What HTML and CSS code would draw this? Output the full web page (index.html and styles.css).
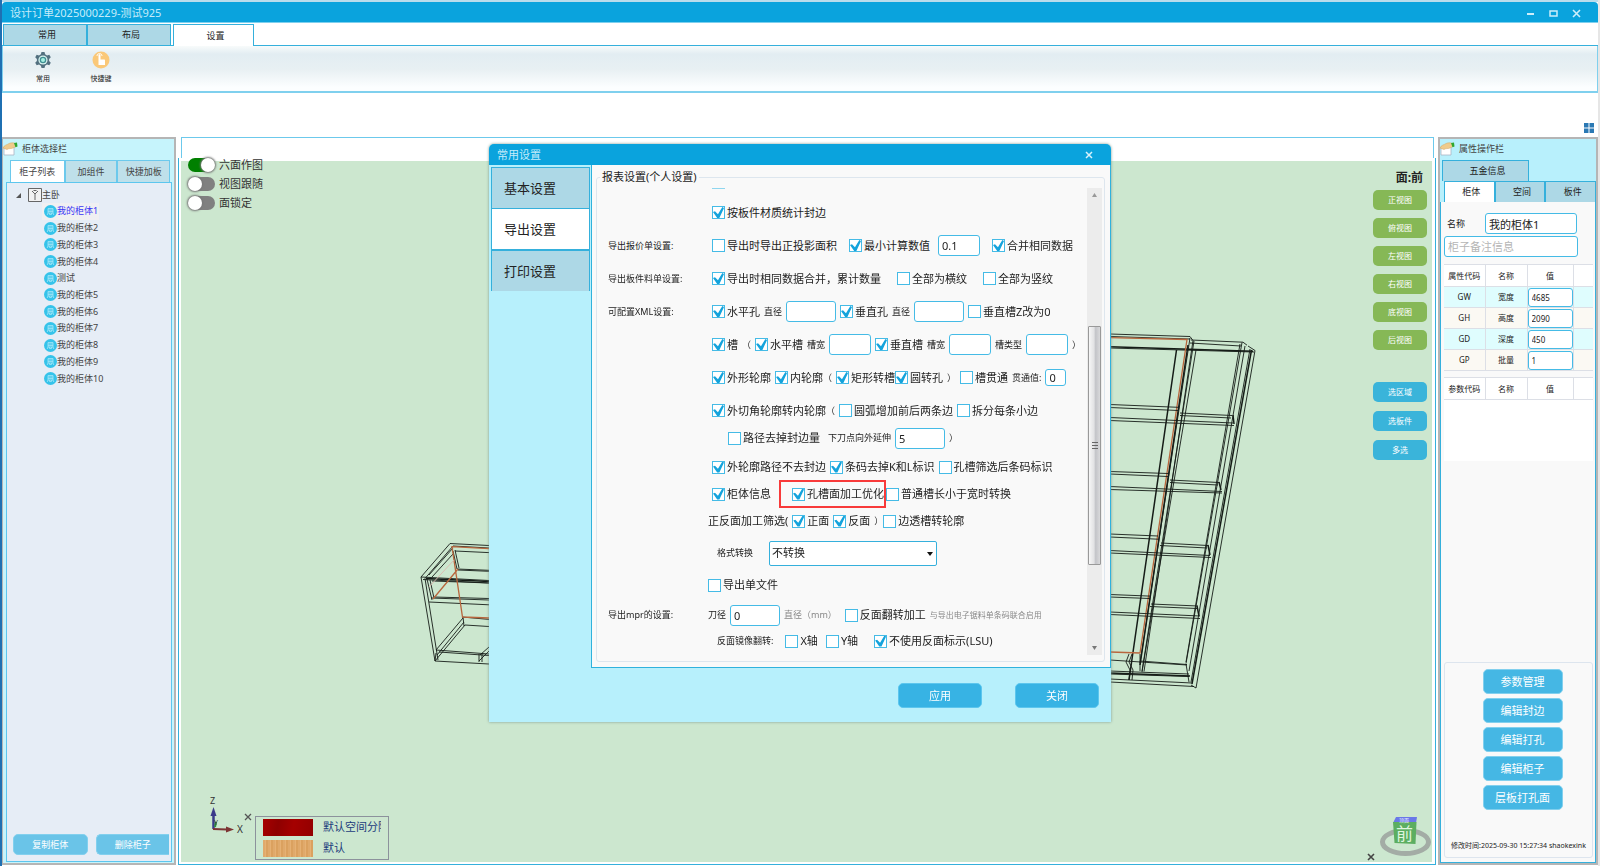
FILE: index.html
```html
<!DOCTYPE html>
<html lang="zh-CN">
<head>
<meta charset="utf-8">
<title>设计订单2025000229-测试925</title>
<link rel="stylesheet" href="styles.css">
</head>
<body>
<svg class="defs" width="0" height="0" aria-hidden="true">
  <defs>
    <symbol id="i-cabinet" viewBox="0 0 13 13">
      <circle cx="6.500" cy="6.500" r="6.500" fill="#35c3ea"/>
      <path d="M4 3.500h5v4.500H4zM4 5h5M4 6.500h5M4 8l-.8 2M9 8l.8 2M5.500 8v1.500h2V8" fill="none" stroke="#a5e6f8" stroke-width=".8"/>
    </symbol>
    <symbol id="i-hand" viewBox="0 0 15 14">
      <path d="M1 5h10v8H1z" fill="#fff" stroke="#a9b4c4" stroke-width=".8"/>
      <path d="M0 6c1-3 4-3 6-4.500C8 .5 11 .6 12 1.500l1 3-3 1.500c-2 1-4 0-6 1.500z" fill="#efcb8c" stroke="#d3a662" stroke-width=".5"/>
      <path d="M11 1l3-.5.5 4-2 .7z" fill="#2fa82f"/>
    </symbol>
  </defs>
</svg>

<div class="window">
  <header class="titlebar">
    <span>设计订单2025000229-测试925</span>
    <div class="winbtns">
      <button aria-label="最小化"><svg width="9" height="9"><path d="M1 5h7" stroke="#cdeefa" stroke-width="2"/></svg></button>
      <button aria-label="最大化"><svg width="9" height="9"><path d="M1 2h7v5H1z" fill="none" stroke="#cdeefa" stroke-width="1.500"/></svg></button>
      <button aria-label="关闭"><svg width="9" height="9"><path d="M1 1l7 7M8 1l-7 7" stroke="#cdeefa" stroke-width="1.600"/></svg></button>
    </div>
  </header>

  <nav class="tabs">
    <button class="tab">常用</button><button class="tab">布局</button><button class="tab tab-on">设置</button>
  </nav>
  <div class="ribbon">
    <button class="tool">
      <svg width="16" height="18" viewBox="0 0 16 18"><path d="M6.500 1h3l.6 2.300 1.900 1.100 2.300-.7 1.500 2.600L14.100 8v2l1.700 1.700-1.500 2.600-2.300-.7-1.900 1.100-.6 2.300h-3l-.6-2.300L4 13.600l-2.300.7-1.500-2.600L1.900 10V8L.2 6.300l1.500-2.600 2.300.7 1.900-1.100z" fill="#52707f"/><circle cx="8" cy="9" r="4.600" fill="#d9f3f0"/><circle cx="8" cy="9" r="3.300" fill="#3f8f93"/><circle cx="8" cy="9" r="2" fill="#a6f0e2"/></svg>
      <span>常用</span>
    </button>
    <button class="tool">
      <svg width="18" height="18" viewBox="0 0 18 18"><circle cx="9" cy="9" r="8.500" fill="#fac878"/><path d="M6.500 4c0-1 2-1 2 0v4.500h3.500c.8 0 1 .5 1 1V14H6.500z" fill="#fff"/><path d="M5 5c0-3.300 5-3.300 5 0" fill="none" stroke="#fff" stroke-width=".9"/></svg>
      <span>快捷键</span>
    </button>
  </div>
  <div class="spacer">
    <svg width="10" height="10"><path d="M0 0h4.500v4.500H0zM5.500 0H10v4.500H5.500zM0 5.500h4.500V10H0zM5.500 5.500H10V10H5.500z" fill="#2b79b4"/></svg>
  </div>

  <div class="work">
    <aside class="side left">
      <h2 class="side-title"><svg width="15" height="14"><use href="#i-hand"/></svg>柜体选择栏</h2>
      <div class="ltabs"><button class="ltab ltab-on">柜子列表</button><button class="ltab">加组件</button><button class="ltab">快捷加板</button></div>
      <div class="treebox">
        <div class="root">
          <svg width="5" height="5"><path d="M5 0v5H0z" fill="#555"/></svg>
          <svg width="14" height="14"><path d="M.5.5h13v13H.5z" fill="#f2f2f2" stroke="#666"/><path d="M7 12V5M4 3l3 3 3-3M5.500 2.500h3" fill="none" stroke="#666"/></svg>
          <span>主卧</span>
        </div>
        <ul class="tree">
          <li class="sel"><svg width="13" height="13"><use href="#i-cabinet"/></svg>我的柜体1</li>
          <li><svg width="13" height="13"><use href="#i-cabinet"/></svg>我的柜体2</li>
          <li><svg width="13" height="13"><use href="#i-cabinet"/></svg>我的柜体3</li>
          <li><svg width="13" height="13"><use href="#i-cabinet"/></svg>我的柜体4</li>
          <li><svg width="13" height="13"><use href="#i-cabinet"/></svg>测试</li>
          <li><svg width="13" height="13"><use href="#i-cabinet"/></svg>我的柜体5</li>
          <li><svg width="13" height="13"><use href="#i-cabinet"/></svg>我的柜体6</li>
          <li><svg width="13" height="13"><use href="#i-cabinet"/></svg>我的柜体7</li>
          <li><svg width="13" height="13"><use href="#i-cabinet"/></svg>我的柜体8</li>
          <li><svg width="13" height="13"><use href="#i-cabinet"/></svg>我的柜体9</li>
          <li><svg width="13" height="13"><use href="#i-cabinet"/></svg>我的柜体10</li>
        </ul>
        <div class="lbtns"><button class="btn pale">复制柜体</button><button class="btn pale cut">删除柜子</button></div>
      </div>
    </aside>

    <main class="center">
      <div class="strip"></div>
      <div class="frame">
        <div class="view">
          <svg class="wire" width="1252" height="700" viewBox="181 161 1252 700" fill="none" stroke="#151c17" stroke-width=".9">
            <g transform="translate(-1 0)">
              <path d="M490 545.500L451 543.500 422 577 436 661 490 664M490 548L454 546 426 578.500 439 660M422 577l68 3.500M424 579.500l66 3.500M433 581l57 2M430 602l60 2.800M432 598l58 2M435 597l55 1.500M428 579l5 21M431 580l4 18M456 551l34 1.600M454 551l4 18 32 1.300M456 550l4 18M459 570l31 1.300M436 661l30-36 24 1.500M437 650l27-32M438 655l27-33M437 650l53 4M440 652l50 3.500M464 617l1 9M463 617l27 2.400M480 661l10-10M481 655l9-8M480 654v8M483 653v9M430 575l24-27M433 577l21-23M437 653l-1 8"/>
              <path d="M490 581.500l-63-3" stroke-width="1.500"/>
              <path d="M490 548.700l-37-2L463.500 617l26.500 1M434 599l25-30" stroke="#b8663d" stroke-width="1.300"/>
              <path d="M430 587l25-27" stroke="#dcb9b0"/>
            </g>
            <g>
              <path d="M1110 334l80 2.500 3 4-49 331M1110 336.500l80 2.500M1191 340l52 2.200 4 3M1190 343l51 3M1190 338l-50 325M1194 341l-52 330M1196 350l-54 322M1242 342.500l-56 321M1240 344l-54 318M1245 346l-56 325M1248 346l7 4.500L1196 688l-5-3M1250 349l-59 333M1110 348l144 4"/>
              <path d="M1110 346.700l143 4.500M1176.500 350L1129 680M1251.500 350L1192 684M1188 345l-48 320" stroke-width="1.500"/>
              <path d="M1110 337.700l77 1.800L1140 653l-30-1" stroke="#b8663d" stroke-width="1.300"/>
              <path d="M1110 404.500l68 2.800M1110 407.500l68 3M1110 417.500l123 5.500M1110 420.500l124 5M1180 413l52 2.500M1180 415.500l51 2.500M1110 471.500l58 2M1110 474l58 2.500M1110 486.500l112 5M1110 489.500l112 3.500M1170 480l49 2.500M1170 482.500l48 2.500M1110 534l48 2M1110 537l48 2.200M1110 550.500l100 5M1110 553l101 4.500M1161 543l47 2.500M1160 545.500l47 2.500M1110 594.500l40 1.600M1110 597l40 1.500M1110 612l90 4M1110 614.500l90 4M1151 604l47 2M1150 606.500l47 2M1110 660l77 5M1110 671l79 3M1110 674l79 2.500M1110 679l82 4M1110 682l84 4.500M1140 661l47 3.500M1129 654l-3 8 4 8-1 10M1132 654l-3 8 4 8-1 10M1140 654v17M1186 664l3 18"/>
              <path d="M1110 673l80 3M1233 415l1 9M1219 482l2 8M1208 545l2 10M1197 606l2 10" stroke-width="1.500"/>
            </g>
          </svg>

          <div class="toggles">
            <label><input type="checkbox" class="switch" checked>六面作图</label>
            <label><input type="checkbox" class="switch">视图跟随</label>
            <label><input type="checkbox" class="switch">面锁定</label>
          </div>

          <div class="views">
            <b>面:前</b>
            <button class="vbtn">正视图</button><button class="vbtn">俯视图</button><button class="vbtn">左视图</button><button class="vbtn">右视图</button><button class="vbtn">底视图</button><button class="vbtn">后视图</button>
            <button class="vbtn blue first">选区域</button><button class="vbtn blue">选板件</button><button class="vbtn blue">多选</button>
          </div>

          <div class="gizmo">
            <svg width="48" height="44" viewBox="205 796 48 44">
              <path d="M213.500 829v-15" stroke="#3a3a8a" stroke-width="2.500"/><path d="M210.500 816l3-9 3 9z" fill="#3a3a8a"/>
              <path d="M213 829l14 .5" stroke="#7d3434" stroke-width="2"/><path d="M226 826.500l8 3-8 3z" fill="#7d3434"/>
              <path d="M215 827l1-5" stroke="#2f8f3a" stroke-width="2"/>
              <text x="210" y="804" font-size="9">Z</text><text x="214" y="825" font-size="7">Y</text><text x="237" y="833" font-size="10">X</text>
              <path d="M245 814l6 6M251 814l-6 6" stroke="#555" stroke-width="1.300"/>
            </svg>
            <dl class="legend">
              <dt class="red"></dt><dd>默认空间分隔</dd>
              <dt class="wood"></dt><dd>默认</dd>
            </dl>
          </div>

          <svg class="cube" width="64" height="44" viewBox="1366 814 64 44">
            <ellipse cx="1405.500" cy="841" rx="23" ry="11.500" fill="none" stroke="#a3aca5" stroke-width="5"/>
            <path d="M1396 816h21l-1 6h-23z" fill="#6a78e8"/><path d="M1393 821h23.500l-1 22-21-1z" fill="#5cae61"/>
            <text x="1399" y="821" font-size="5" fill="#e6e9ff">顶面</text>
            <text x="1396" y="839" font-size="17" fill="#dff5df">前</text>
            <path d="M1368 853l6 6M1374 853l-6 6" stroke="#444" stroke-width="1.600"/>
          </svg>
        </div>
      </div>
    </main>

    <aside class="side right">
      <h2 class="side-title"><svg width="15" height="14"><use href="#i-hand"/></svg>属性操作栏</h2>
      <button class="rtab wide">五金信息</button>
      <div class="rtabs"><button class="rtab rtab-on">柜体</button><button class="rtab">空间</button><button class="rtab">板件</button></div>
      <div class="props">
        <div class="name"><label for="nm">名称</label><input id="nm" class="field" value="我的柜体1"></div>
        <input class="field remark" placeholder="柜子备注信息" aria-label="柜子备注信息">
        <table>
          <thead><tr><th class="c1">属性代码</th><th class="c2">名称</th><th class="c3">值</th><th></th></tr></thead>
          <tbody>
            <tr><td>GW</td><td>宽度</td><td class="v"><input class="field" aria-label="宽度" value="4685"></td><td></td></tr>
            <tr><td>GH</td><td>高度</td><td class="v"><input class="field" aria-label="高度" value="2090"></td><td></td></tr>
            <tr><td>GD</td><td>深度</td><td class="v"><input class="field" aria-label="深度" value="450"></td><td></td></tr>
            <tr><td>GP</td><td>批量</td><td class="v"><input class="field" aria-label="批量" value="1"></td><td></td></tr>
          </tbody>
        </table>
        <div class="params">
          <table><thead><tr><th class="c1">参数代码</th><th class="c2">名称</th><th class="c3">值</th><th></th></tr></thead></table>
        </div>
        <div class="actions">
          <button class="btn">参数管理</button><button class="btn">编辑封边</button><button class="btn">编辑打孔</button><button class="btn">编辑柜子</button><button class="btn">层板打孔面</button>
          <p>修改时间:2025-09-30 15:27:34 shaokexink</p>
        </div>
      </div>
    </aside>
  </div>
</div>

<div class="overlay">
  <section class="dialog" role="dialog" aria-label="常用设置">
    <header class="dlg-title"><span>常用设置</span><button aria-label="关闭"><svg width="8" height="8"><path d="M1 1l6 6M7 1L1 7" stroke="#d8f2fb" stroke-width="1.500"/></svg></button></header>
    <div class="dlg-body">
      <nav class="dtabs"><button class="dtab">基本设置</button><button class="dtab dtab-on">导出设置</button><button class="dtab">打印设置</button></nav>
      <div class="panel">
        <fieldset class="group">
          <legend>报表设置(个人设置)</legend>
          <div class="scroll">
            <div class="rows">
              <div class="clipped"></div>
              <div class="row"><span class="cap"></span><label class="ck"><input type="checkbox" checked>按板件材质统计封边</label></div>
              <div class="row"><span class="cap">导出报价单设置:</span><label class="ck"><input type="checkbox">导出时导出正投影面积</label><label class="ck m8"><input type="checkbox" checked>最小计算数值</label><input class="field w42 m4" aria-label="最小计算数值" value="0.1"><label class="ck m8"><input type="checkbox" checked>合并相同数据</label></div>
              <div class="row"><span class="cap">导出板件料单设置:</span><label class="ck"><input type="checkbox" checked>导出时相同数据合并，累计数量</label><label class="ck m12"><input type="checkbox">全部为横纹</label><label class="ck m12"><input type="checkbox">全部为竖纹</label></div>
              <div class="row"><span class="cap">可配置XML设置:</span><label class="ck"><input type="checkbox" checked>水平孔</label><label class="sm" for="d1">直径</label><input class="field w50" id="d1"><label class="ck"><input type="checkbox" checked>垂直孔</label><label class="sm" for="d2">直径</label><input class="field w50" id="d2"><label class="ck"><input type="checkbox">垂直槽Z改为0</label></div>
              <div class="row"><span class="cap"></span><label class="ck"><input type="checkbox" checked>槽</label><span class="sm">（</span><label class="ck"><input type="checkbox" checked>水平槽</label><label class="sm" for="s1">槽宽</label><input class="field w42" id="s1"><label class="ck"><input type="checkbox" checked>垂直槽</label><label class="sm" for="s2">槽宽</label><input class="field w42" id="s2"><label class="sm" for="s3">槽类型</label><input class="field w42" id="s3"><span class="sm">）</span></div>
              <div class="row"><span class="cap"></span><label class="ck"><input type="checkbox" checked>外形轮廓</label><label class="ck"><input type="checkbox" checked>内轮廓</label><span class="sm near">（</span><label class="ck"><input type="checkbox" checked>矩形转槽</label><label class="ck near"><input type="checkbox" checked>圆转孔</label><span class="sm">）</span><label class="ck"><input type="checkbox">槽贯通</label><label class="sm" for="t1">贯通值:</label><input class="field short" id="t1" value="0"></div>
              <div class="row"><span class="cap"></span><label class="ck"><input type="checkbox" checked>外切角轮廓转内轮廓</label><span class="sm near">（</span><label class="ck"><input type="checkbox">圆弧增加前后两条边</label><label class="ck"><input type="checkbox">拆分每条小边</label></div>
              <div class="row h22"><span class="cap in"></span><label class="ck"><input type="checkbox">路径去掉封边量</label><label class="sm m4" for="k1">下刀点向外延伸</label><input class="field w50" id="k1" value="5"><span class="sm">）</span></div>
              <div class="row h36"><span class="cap"></span><label class="ck"><input type="checkbox" checked>外轮廓路径不去封边</label><label class="ck"><input type="checkbox" checked>条码去掉K和L标识</label><label class="ck"><input type="checkbox">孔槽筛选后条码标识</label></div>
              <div class="row h18"><span class="cap"></span><label class="ck"><input type="checkbox" checked>柜体信息</label><label class="ck mark m4"><input type="checkbox" checked>孔槽面加工优化</label><label class="ck near"><input type="checkbox">普通槽长小于宽时转换</label></div>
              <div class="row h36"><span class="cap out"></span><span>正反面加工筛选(</span><label class="ck"><input type="checkbox" checked>正面</label><label class="ck"><input type="checkbox" checked>反面</label><span class="sm">）</span><label class="ck near"><input type="checkbox">边透槽转轮廓</label></div>
              <div class="row h28"><span class="cap mid"></span><label class="sm" for="fmt">格式转换</label><span class="combo m12"><select id="fmt"><option>不转换</option></select><svg width="6" height="4"><path d="M0 0h6L3 4z" fill="#111"/></svg></span></div>
              <div class="row h36"><span class="cap out"></span><label class="ck"><input type="checkbox">导出单文件</label></div>
              <div class="row h24"><span class="cap out">导出mpr的设置:</span><label class="sm" for="r1">刀径</label><input class="field w50" id="r1" value="0"><span class="sm gray">直径（mm）</span><label class="ck m4"><input type="checkbox">反面翻转加工</label><span class="xs gray">与导出电子锯料单条码联合启用</span></div>
              <div class="row h28"><span class="cap mid"></span><span class="sm">反面镜像翻转:</span><label class="ck m8"><input type="checkbox">X轴</label><label class="ck m4"><input type="checkbox">Y轴</label><label class="ck m12"><input type="checkbox" checked>不使用反面标示(LSU)</label></div>
            </div>
            <div class="bar">
              <svg width="5" height="4"><path d="M0 4h5L2.500 0z" fill="#999"/></svg>
              <div class="track"><div class="thumb"><i></i><i></i><i></i></div></div>
              <svg width="5" height="4"><path d="M0 0h5L2.500 4z" fill="#777"/></svg>
            </div>
          </div>
        </fieldset>
      </div>
    </div>
    <footer class="dlg-foot"><button class="btn deep">应用</button><button class="btn deep">关闭</button></footer>
  </section>
</div>
</body>
</html>
```
FILE: styles.css
```css
* { box-sizing: border-box; }
body {
  margin: 0;
  height: 100vh;
  overflow: hidden;
  background: linear-gradient(90deg, #1f70b2 2px, #e6e6e6 2px);
  font: 11px/16px "Noto Sans", "Noto Sans CJK SC", sans-serif;
  color: #222;
  white-space: nowrap;
}
button, input, select { font: inherit; color: inherit; margin: 0; padding: 0; }
button { border: 0; background: none; }
h2, ul, dl, dd, p { margin: 0; padding: 0; }
.defs { position: absolute; }

.window {
  height: 100%;
  display: flex;
  flex-direction: column;
  margin: 0 2px;
  border-top: 2px solid #b9dcec;
  background: #fff;
}
.titlebar {
  height: 21px;
  flex: none;
  display: flex;
  justify-content: space-between;
  align-items: center;
  padding: 2px 17px 0 8px;
  border-bottom: 1px solid #7fd0ee;
  border-radius: 4px 4px 0 0;
  background: #0aa3dd;
  color: #c5ecfa;
}
.winbtns { display: flex; gap: 14px; }
.winbtns button { display: flex; width: 9px; height: 9px; }

.tabs {
  height: 22px;
  margin-top: 1px;
  flex: none;
  display: flex;
  padding-left: 1px;
  border-bottom: 1px solid #35b0dc;
}
.tab { width: 84px; padding-left: 4px; border: 1px solid #35b0dc; border-bottom: 0; background: #add8e6; font-size: 9px; }
.tab-on { width: 81px; height: 22px; margin-left: 2px; background: #fff; }
.ribbon {
  height: 47px;
  flex: none;
  display: flex;
  gap: 36px;
  padding: 5px 29px 0;
  border: solid #7fd0ee;
  border-width: 0 1px 2px;
  background: linear-gradient(#f8fbfb, #e2edf2 18%, #e8f0f3 52%, #fcfeff 92%);
}
.tool { display: flex; flex-direction: column; align-items: center; justify-content: flex-start; gap: 2px; width: 22px; font-size: 7px; }
.spacer { height: 44px; flex: none; display: flex; justify-content: flex-end; align-items: flex-end; padding: 0 4px 4px 0; }

.work { flex: 1; min-height: 0; display: flex; gap: 2px; }
.side { display: flex; flex-direction: column; border: 2px solid #b5b5b5; border-left-width: 1px; margin-bottom: 1px; }
.side-title { display: flex; align-items: center; gap: 4px; height: 20px; padding-bottom: 2px; flex: none; font-size: 9px; font-weight: 400; color: #444; }
.left { width: 174px; padding: 0 2px 1px 3px; background: #c6f4fc; }
.left .side-title { height: 21px; margin-left: -3px; }
.ltabs { display: flex; padding: 0 2px 0 4px; height: 22px; flex: none; }
.ltab { flex: 50; border: 1px solid #6cc9ec; border-bottom: 0; background: #bfe0ea; font-size: 9px; color: #444; }
.ltab-on { flex: 52; background: #fff; }
.treebox { flex: 1; display: flex; flex-direction: column; border: 1px solid #5cc6ee; background: #e6edf6; font-size: 9px; color: #444; }
.root { display: flex; align-items: center; padding: 4px 0 0 9px; }
.root svg + svg { margin-left: 7px; }
.tree { display: grid; grid-auto-rows: 1fr; height: 184px; margin-left: 35px; justify-items: start; list-style: none; }
.tree li { display: flex; align-items: center; padding: 0 1px 0 2px; }
.tree .sel { background: #f0f0f2; color: #3a34f5; }
.lbtns { display: flex; gap: 8px; margin-top: auto; padding: 0 2px 6px 6px; }
.btn { width: 80px; height: 25px; border: 1px solid #82d0ee; border-radius: 5px; background: #45b7e4; color: #fff; }
.pale { flex: 1; height: 21px; background: #6ac4e8; }
.cut { border-radius: 5px 0 0 5px; border-right: 0; }

.center { flex: 1; min-width: 0; display: flex; flex-direction: column; }
.strip { height: 21px; flex: none; margin: 0 2px 0 3px; border: 1px solid #6cc9ec; border-bottom: 0; background: #fff; }
.frame { flex: 1; display: flex; padding: 3px 3px 2px 2px; border: 1px solid #35b0dc; border-top: 0; margin-bottom: 1px; }
.view { flex: 1; position: relative; background: #cce7cf; }
.wire { position: absolute; left: 0; top: 0; }
.toggles { position: absolute; left: 7px; top: -4px; display: flex; flex-direction: column; gap: 3px; color: #333; }
.toggles label { display: flex; align-items: center; gap: 4px; }
.switch { appearance: none; width: 27px; height: 14px; border-radius: 7px; background: #808080; display: flex; }
.switch::before { content: ""; width: 14px; height: 14px; border-radius: 50%; background: #fff; box-shadow: 0 0 2px 1px #777; }
.switch:checked { background: #008000; justify-content: flex-end; }
.views { position: absolute; right: 5px; top: 9px; display: flex; flex-direction: column; gap: 8px; align-items: flex-end; }
.views b { font-size: 12px; line-height: 16px; margin: 0 4px -4px 0; }
.vbtn { width: 54px; height: 20px; border-radius: 5px; background: #86b856; color: #fff; font-size: 8px; }
.vbtn.blue { margin-top: 1px; background: #3ab4da; }
.vbtn.first { margin-top: 24px; }
.gizmo { position: absolute; left: 24px; bottom: 2px; display: flex; align-items: flex-start; gap: 2px; }
.gizmo svg { margin-top: -20px; overflow: visible; }
.gizmo text { fill: #333; }
.legend { display: grid; grid-template-columns: 50px 58px; gap: 4px 10px; width: 134px; padding: 2px 7px; border: 1px solid #8c929c; color: #1c3b7c; }
.legend dt { height: 17px; }
.legend dd { overflow: hidden; }
.red { background: linear-gradient(100deg, #a80000, #8e0000 30%, #a50000 60%, #930000); }
.wood { background: repeating-linear-gradient(90deg, #e0a96b 0 2px, #e6b174 2px 3px, #dba15f 3px 5px); }
.cube { position: absolute; right: 2px; bottom: 3px; overflow: visible; }

.right { width: 160px; padding-top: 1px; background: #b8f0fc; border-left-width: 2px; }
.rtab { height: 21px; padding-left: 4px; border: 1px solid #35b0dc; border-bottom: 0; background: #add8e6; font-size: 9px; flex: 1; }
.rtab.wide { width: 87px; margin-left: 2px; flex: none; }
.rtabs { display: flex; flex: none; padding-left: 4px; }
.rtab-on { background: #fff; }
.props { flex: 1; display: flex; flex-direction: column; padding: 11px 2px 4px 3px; border: 1px solid #35b0dc; border-top: 0; background: #f9f9f9; }
.name { display: flex; align-items: center; justify-content: space-between; padding: 0 16px 0 3px; font-size: 9px; }
.name .field { width: 92px; font-size: 11px; }
.field { height: 21px; padding: 0 3px; border: 1px solid #45bbe6; border-radius: 3px; background: #fff; outline: 0; }
.remark { width: 134px; margin-top: 2px; }
.field::placeholder { color: #b5b5b5; }
table { width: 100%; table-layout: fixed; border-collapse: collapse; margin-top: 7px; font-size: 8px; background: #fff; }
th { height: 22px; font-weight: 400; }
th, td { padding: 0; border: 1px solid #dcdfe6; border-width: 1px 1px 1px 0; text-align: center; }
th:last-child, td:last-child { border-right: 0; }
td { height: 21px; line-height: 12px; }
tbody tr { background: #fbf9f3; }
tbody tr:nth-child(odd) { background: #dffdfe; }
.c1 { width: 41px; } .c2 { width: 42px; } .c3 { width: 46px; }
.v .field { display: block; width: 100%; height: 19px; }
.params { height: 90px; background: linear-gradient(#f9f9f9 6px, #fff 6px); }
.params table { margin-top: 6px; }
.actions { margin-top: auto; display: flex; flex-direction: column; align-items: center; gap: 4px; padding: 6px 0 3px; border: 1px solid #dde5ee; border-radius: 3px; }
.actions .btn { margin-left: 8px; }
.actions p { margin: 24px 0 0; font-size: 7px; }

.overlay { position: fixed; inset: 0; display: flex; align-items: center; justify-content: center; pointer-events: none; }
.dialog { width: 622px; border-radius: 5px 5px 0 0; overflow: hidden; background: #b7f0fc; box-shadow: 0 0 3px #7a9a90; pointer-events: auto; }
.dlg-title { height: 21px; display: flex; justify-content: space-between; align-items: center; padding: 1px 18px 0 8px; background: #0aa3dd; color: #c5ecfa; }
.dlg-title button { display: flex; }
.dlg-body { display: flex; }
.dtabs { width: 102px; padding: 2px 1px 0 2px; }
.dtab { display: block; width: 100%; height: 41px; padding-left: 12px; border: 1px solid #35b0dc; border-bottom: 0; background: #add8e6; font-size: 13px; text-align: left; }
.dtab-on { background: #fff; height: 42px; border-bottom: 1px solid #35b0dc; }
.panel { flex: 1; padding: 4px 5px 5px 4px; border: 1px solid #2fb2dd; border-top: 0; background: #f9f9f9; }
.group { margin: 0; padding: 0 2px 6px 0; min-width: 0; border: 1px solid #dde6ee; border-radius: 3px; }
legend { margin-left: 3px; padding: 0 2px; }
.scroll { display: flex; justify-content: space-between; padding-top: 3px; }
.rows { flex: 1; min-width: 0; padding-left: 11px; }
.clipped { width: 13px; height: 1px; margin: 0 0 7px 104px; background: #8fd6ef; }
.row { height: 33px; display: flex; align-items: center; gap: 4px; }
.h18 { height: 18px; } .h22 { height: 22px; } .h24 { height: 24px; } .h28 { height: 28px; } .h36 { height: 36px; }
.cap { width: 100px; flex: none; font-size: 9px; }
.cap.in { width: 116px; } .cap.out { width: 96px; } .cap.mid { width: 105px; }
.sm { font-size: 9px; } .xs { font-size: 8px; }
.gray { color: #888; }
.near { margin-left: -4px; }
.m4 { margin-left: 4px; } .m8 { margin-left: 8px; } .m12 { margin-left: 12px; }
.ck { display: flex; align-items: center; gap: 2px; flex: none; }
.ck input { appearance: none; width: 13px; height: 13px; border: 1px solid #45bbe6; background: #fff; }
.ck input:checked::before {
  content: "";
  display: block;
  width: 11px;
  height: 11px;
  background: #14a3dc;
  clip-path: polygon(0 45%, 18% 38%, 45% 66%, 85% 0, 100% 8%, 58% 100%, 38% 100%);
}
.mark { height: 28px; padding-left: 11px; border: 2px solid #f83a3a; }
.field.w42 { width: 42px; } .field.w50 { width: 50px; }
.field.short { width: 21px; height: 17px; }
.combo { position: relative; display: flex; }
.combo select { appearance: none; width: 168px; height: 25px; padding-left: 2px; border: 1px solid #35b0dc; border-radius: 2px; background: #fff; }
.combo svg { position: absolute; right: 4px; top: 11px; }
.bar { width: 15px; display: flex; flex-direction: column; align-items: center; padding: 5px 1px; background: #ececec; }
.track { flex: 1; width: 100%; margin: 2px 0; display: grid; grid-template-rows: 127px 239px; }
.thumb { grid-row: 2; display: flex; flex-direction: column; gap: 1px; align-items: center; justify-content: center; border: 1px solid #999; border-radius: 1px; background: linear-gradient(90deg, #f6f6f6, #e2e2e4 45%, #c3c4c8 60%, #d9d9db); }
.thumb i { width: 6px; height: 1px; border-top: 1px solid #666; box-sizing: content-box; }
.dlg-foot { display: flex; justify-content: flex-end; gap: 33px; padding: 15px 12px 14px; }
.deep { width: 84px; background: #37b3e4; border-color: #5cc6ee; }
```
